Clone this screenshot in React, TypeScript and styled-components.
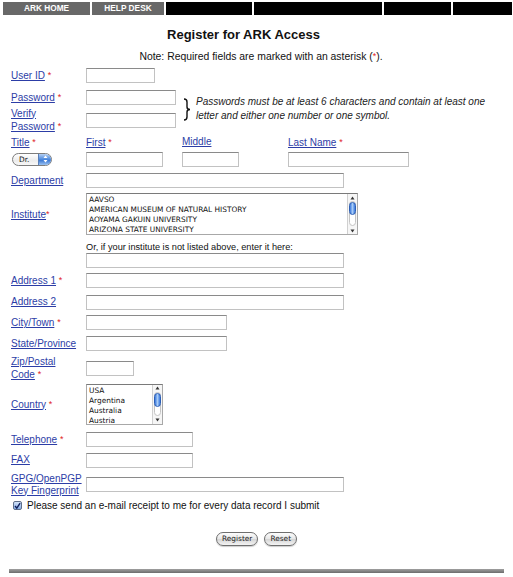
import styled, { createGlobalStyle } from "styled-components";

const GlobalStyle = createGlobalStyle`
  body {
    margin: 0;
    background: #fff;
    color: #111;
    font-family: "Liberation Sans", Arial, sans-serif;
  }
`;

const Page = styled.div`
  width: 513px;
`;

const NavBar = styled.nav`
  display: flex;
  gap: 2px;
  height: 13px;
  margin: 2px 0 0 3px;
`;

const NavCell = styled.a<{ $w: number; $dark?: boolean }>`
  flex: 0 0 ${(p) => p.$w}px;
  background: ${(p) => (p.$dark ? "#000" : "#686868")};
  color: #fff;
  font-size: 8.3px;
  font-weight: bold;
  line-height: 13px;
  text-align: center;
  text-decoration: none;
`;

const Title = styled.h1`
  margin: 12px 26px 0 0;
  font-size: 13px;
  line-height: 16px;
  font-weight: bold;
  text-align: center;
`;

const Note = styled.p`
  margin: 7px 0 0 9px;
  font-size: 10.4px;
  line-height: 13px;
  text-align: center;
`;

const Form = styled.form`
  padding-left: 11px;
`;

const Row = styled.div<{ $h: number; $mt: number }>`
  display: grid;
  grid-template-columns: 75px auto;
  align-items: center;
  justify-items: start;
  height: ${(p) => p.$h}px;
  margin-top: ${(p) => p.$mt}px;
`;

const NameRow = styled(Row)`
  grid-template-columns: 75px 96px 106px auto;
`;

const LabelCell = styled.span`
  font-size: 10px;
  line-height: 12px;
`;

const Label = styled.a`
  color: #2c3da6;
  text-decoration: underline;
`;

const Req = styled.span`
  color: #e02424;
  font-size: 9px;
  vertical-align: 1px;
`;

const TextInput = styled.input<{ $w: number }>`
  width: ${(p) => p.$w}px;
  height: 15px;
  box-sizing: border-box;
  margin: 0;
  padding: 0 2px;
  border: 1px solid #c2c2c2;
  border-top-color: #8a8a8a;
  background: #fff;
  font: 10px "Liberation Sans", Arial, sans-serif;
`;

const PwGroup = styled.div`
  display: flex;
  align-items: center;
  margin-top: 4px;
`;

const PwRows = styled.div`
  width: 172px;
`;

const Hint = styled.div`
  display: flex;
  align-items: center;
  margin-bottom: 3px;
`;

const HintText = styled.p`
  width: 300px;
  margin: 0 0 0 5px;
  font-size: 10px;
  font-style: italic;
  line-height: 14px;
  color: #222;
`;

const TitleSelect = styled.div`
  display: flex;
  width: 40px;
  height: 13px;
  box-sizing: border-box;
  margin-left: 1px;
  border: 1px solid #7d7d7d;
  border-radius: 7px;
  overflow: hidden;
  background: linear-gradient(#fff, #ececec 60%, #f8f8f8);
`;

const SelText = styled.span`
  flex: 1;
  padding-left: 6px;
  font: 7.4px "DejaVu Sans", sans-serif;
  line-height: 11px;
`;

const SelButton = styled.span`
  width: 12px;
  display: flex;
  align-items: center;
  justify-content: center;
  border-left: 1px solid #5a7fb8;
  background: linear-gradient(#b5d0f3, #4a88de 50%, #2f6fd0 51%, #9cc3f2);
`;

const ListBox = styled.div<{ $w: number; $h: number }>`
  display: flex;
  width: ${(p) => p.$w}px;
  height: ${(p) => p.$h}px;
  box-sizing: border-box;
  border: 1px solid #a8a8a8;
  border-top-color: #7a7a7a;
  background: #fff;
`;

const Options = styled.ul`
  flex: 1;
  margin: 0;
  padding: 1px 0 0 2px;
  list-style: none;
  overflow: hidden;
  white-space: nowrap;
  font: 7.4px "DejaVu Sans", sans-serif;
  line-height: 10px;
  color: #111;
`;

const ScrollBar = styled.div`
  width: 9px;
  display: flex;
  flex-direction: column;
  align-items: center;
  border-left: 1px solid #d0d0d0;
  background: #f6f6f6;
`;

const Arrow = styled.div`
  height: 7px;
  display: flex;
  align-items: center;
  justify-content: center;
`;

const Track = styled.div`
  flex: 1;
  width: 5px;
  margin: 0 0 1px;
  border: 1px solid #c4c4c4;
  border-radius: 4px;
  background: #fff;
`;

const Thumb = styled.div<{ $h: number }>`
  height: ${(p) => p.$h}px;
  margin: 0 -1px;
  border: 1px solid #2c5fb6;
  border-radius: 4px;
  background: linear-gradient(90deg, #3b79de, #a7cbf6 50%, #3b79de);
`;

const SmallText = styled.span`
  font-size: 9.2px;
  line-height: 12px;
`;

const CheckRow = styled.label`
  display: flex;
  align-items: center;
  gap: 5px;
  height: 13px;
  margin: 2px 0 0 2px;
  font-size: 10px;
`;

const CheckBox = styled.span`
  width: 9px;
  height: 9px;
  box-sizing: border-box;
  display: flex;
  align-items: center;
  justify-content: center;
  border: 1px solid #5f6f8a;
  border-radius: 2px;
  background: linear-gradient(#d4e3f8, #85ace5);
`;

const Buttons = styled.div`
  display: flex;
  justify-content: center;
  gap: 6px;
  height: 15px;
  margin-top: 20px;
`;

const PillButton = styled.button`
  height: 14px;
  margin: 0;
  padding: 0 5px;
  border: 1px solid #6e6e6e;
  border-radius: 7px;
  background: linear-gradient(#fdfdfd, #e6e6e6 50%, #d4d4d4 51%, #f4f4f4);
  box-shadow: 0 1px 1px rgba(0, 0, 0, 0.2);
  color: #222;
  font: 7.4px "DejaVu Sans", sans-serif;
  line-height: 12px;
`;

const Footer = styled.div`
  height: 4px;
  margin: 22px 9px 0;
  background: linear-gradient(#a0a0a0, #6c6c6c);
`;

const UpDown = () => (
  <svg width="5" height="8" viewBox="0 0 5 8">
    <path d="M2.5 0.5 L4.5 3 L0.5 3 Z M2.5 7.5 L4.5 5 L0.5 5 Z" fill="#fff" />
  </svg>
);

const Tri = ({ down }: { down?: boolean }) => (
  <svg width="5" height="4" viewBox="0 0 5 4">
    <path d={down ? "M0.5 0.5 L4.5 0.5 L2.5 3.5 Z" : "M0.5 3.5 L4.5 3.5 L2.5 0.5 Z"} fill="#333" />
  </svg>
);

const Brace = () => (
  <svg width="8" height="23" viewBox="0 0 8 23">
    <path
      d="M1 1 Q4 1 4 4 L4 9 Q4 11.5 7 11.5 Q4 11.5 4 14 L4 19 Q4 22 1 22"
      fill="none"
      stroke="#111"
      strokeWidth="1.4"
    />
  </svg>
);

const Scroll = ({ thumb }: { thumb: number }) => (
  <ScrollBar>
    <Arrow>
      <Tri />
    </Arrow>
    <Track>
      <Thumb $h={thumb} />
    </Track>
    <Arrow>
      <Tri down />
    </Arrow>
  </ScrollBar>
);

type FieldProps = { label: React.ReactNode; req?: boolean; tight?: boolean };

const FieldLabel = ({ label, req, tight }: FieldProps) => (
  <LabelCell>
    <Label href="#">{label}</Label>
    {req && (tight ? <Req>*</Req> : <> <Req>*</Req></>)}
  </LabelCell>
);

const institutes = [
  "AAVSO",
  "AMERICAN MUSEUM OF NATURAL HISTORY",
  "AOYAMA GAKUIN UNIVERSITY",
  "ARIZONA STATE UNIVERSITY",
];

const countries = ["USA", "Argentina", "Australia", "Austria"];

const App = () => {
  return (
    <Page>
      <GlobalStyle />
      <NavBar>
        <NavCell href="#" $w={87}>ARK HOME</NavCell>
        <NavCell href="#" $w={72}>HELP DESK</NavCell>
        <NavCell $w={86} $dark />
        <NavCell $w={128} $dark />
        <NavCell $w={67} $dark />
        <NavCell $w={59} $dark />
      </NavBar>

      <Title>Register for ARK Access</Title>
      <Note>
        Note: Required fields are marked with an asterisk (<Req>*</Req>).
      </Note>

      <Form>
        <Row $h={18} $mt={3}>
          <FieldLabel label="User ID" req />
          <TextInput $w={69} />
        </Row>

        <PwGroup>
          <PwRows>
            <Row $h={18} $mt={0}>
              <FieldLabel label="Password" req />
              <TextInput type="password" $w={90} />
            </Row>
            <Row $h={26} $mt={1}>
              <FieldLabel
                label={
                  <>
                    Verify
                    <br />
                    Password
                  </>
                }
                req
              />
              <TextInput type="password" $w={90} />
            </Row>
          </PwRows>
          <Hint>
            <Brace />
            <HintText>
              Passwords must be at least 6 characters and contain at least one letter and
              either one number or one symbol.
            </HintText>
          </Hint>
        </PwGroup>

        <NameRow $h={14} $mt={2}>
          <FieldLabel label="Title" req />
          <FieldLabel label="First" req />
          <FieldLabel label="Middle" />
          <FieldLabel label="Last Name" req />
        </NameRow>
        <NameRow $h={16} $mt={2}>
          <TitleSelect>
            <SelText>Dr.</SelText>
            <SelButton>
              <UpDown />
            </SelButton>
          </TitleSelect>
          <TextInput $w={77} />
          <TextInput $w={57} />
          <TextInput $w={121} />
        </NameRow>

        <Row $h={17} $mt={5}>
          <FieldLabel label="Department" />
          <TextInput $w={258} />
        </Row>

        <Row $h={44} $mt={3}>
          <FieldLabel label="Institute" req tight />
          <ListBox $w={272} $h={42}>
            <Options>
              {institutes.map((i) => (
                <li key={i}>{i}</li>
              ))}
            </Options>
            <Scroll thumb={11} />
          </ListBox>
        </Row>
        <Row $h={12} $mt={5}>
          <span />
          <SmallText>Or, if your institute is not listed above, enter it here:</SmallText>
        </Row>
        <Row $h={15} $mt={0}>
          <span />
          <TextInput $w={258} />
        </Row>

        <Row $h={17} $mt={4}>
          <FieldLabel label="Address 1" req />
          <TextInput $w={258} />
        </Row>
        <Row $h={16} $mt={5}>
          <FieldLabel label="Address 2" />
          <TextInput $w={258} />
        </Row>
        <Row $h={15} $mt={5}>
          <FieldLabel label="City/Town" req />
          <TextInput $w={141} />
        </Row>
        <Row $h={15} $mt={6}>
          <FieldLabel label="State/Province" />
          <TextInput $w={141} />
        </Row>
        <Row $h={26} $mt={4}>
          <FieldLabel
            label={
              <>
                Zip/Postal
                <br />
                Code
              </>
            }
            req
          />
          <TextInput $w={48} />
        </Row>

        <Row $h={42} $mt={2}>
          <FieldLabel label="Country" req />
          <ListBox $w={77} $h={41}>
            <Options>
              {countries.map((c) => (
                <li key={c}>{c}</li>
              ))}
            </Options>
            <Scroll thumb={12} />
          </ListBox>
        </Row>

        <Row $h={16} $mt={6}>
          <FieldLabel label="Telephone" req />
          <TextInput $w={107} />
        </Row>
        <Row $h={16} $mt={5}>
          <FieldLabel label="FAX" />
          <TextInput $w={107} />
        </Row>
        <Row $h={25} $mt={4}>
          <FieldLabel
            label={
              <>
                GPG/OpenPGP
                <br />
                Key Fingerprint
              </>
            }
          />
          <TextInput $w={258} />
        </Row>

        <CheckRow>
          <CheckBox>
            <svg width="8" height="8" viewBox="0 0 8 8">
              <path d="M1.2 4 L3.2 6.5 L7 0.8" fill="none" stroke="#0f1f5c" strokeWidth="1.6" />
            </svg>
          </CheckBox>
          Please send an e-mail receipt to me for every data record I submit
        </CheckRow>
      </Form>

      <Buttons>
        <PillButton type="button">Register</PillButton>
        <PillButton type="reset">Reset</PillButton>
      </Buttons>

      <Footer />
    </Page>
  );
};

export default App;
